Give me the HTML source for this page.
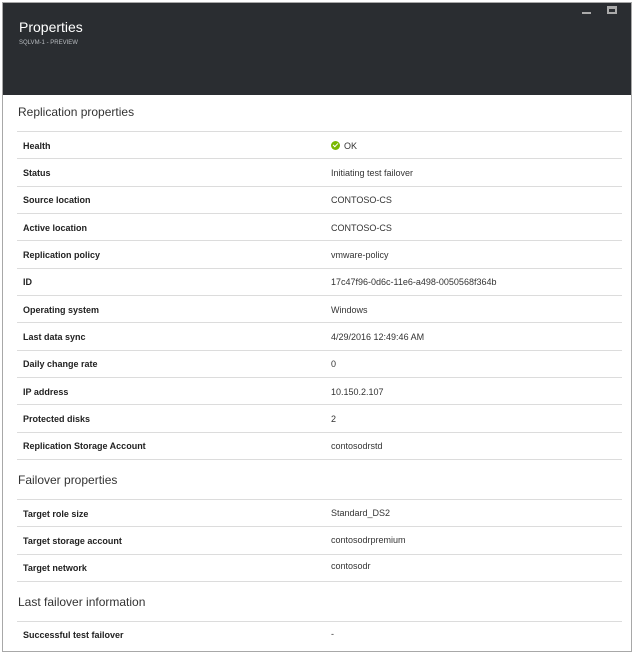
<!DOCTYPE html>
<html><head><meta charset="utf-8"><style>
*{margin:0;padding:0;box-sizing:border-box}
body{width:635px;height:645px;background:#fff;font-family:"Liberation Sans",sans-serif;position:relative;overflow:hidden;color:#222}
.frame{position:absolute;left:2px;top:2px;width:630px;height:650px;border:1px solid #a8a8a8}
.hdr{position:absolute;left:3px;top:3px;width:628px;height:92px;background:#2a2d31}
.t{position:absolute;left:16px;top:16px;color:#fff;font-size:14px}
.s{position:absolute;left:16px;top:37px;color:#b8bcc0;font-size:6px}
.min{position:absolute;left:579px;top:9px;width:9px;height:2px;background:#aaa}
.max{position:absolute;left:604px;top:3px;width:10px;height:8px;border:2px solid #aaa;border-top-width:3px}
.h{position:absolute;left:18px;font-size:12px;color:#333}
.ln{position:absolute;left:17px;width:605px;height:1px;background:#dcdcdc}
.l{position:absolute;left:23px;font-size:9px;font-weight:bold;color:#222}
.v{position:absolute;left:331px;font-size:9px;color:#333}
.ok{display:inline-block;width:9px;height:9px;border-radius:50%;background:#7ab800;vertical-align:-1px;margin-right:4px;position:relative}
.ok:after{content:"";position:absolute;left:2px;top:1.5px;width:4px;height:2px;border-left:1.5px solid #fff;border-bottom:1.5px solid #fff;transform:rotate(-45deg)}
</style></head><body>
<div class="frame"></div>
<div class="hdr"><div class="t">Properties</div><div class="s">SQLVM-1 - PREVIEW</div><div class="min"></div><div class="max"></div></div>
<div class="h" style="top:105px">Replication properties</div>
<div class="ln" style="top:131px"></div>
<div class="l" style="top:141px">Health</div><div class="v" style="top:141px"><span class="ok"></span>OK</div>
<div class="ln" style="top:158px"></div>
<div class="l" style="top:168px">Status</div><div class="v" style="top:168px">Initiating test failover</div>
<div class="ln" style="top:186px"></div>
<div class="l" style="top:195px">Source location</div><div class="v" style="top:195px">CONTOSO-CS</div>
<div class="ln" style="top:213px"></div>
<div class="l" style="top:223px">Active location</div><div class="v" style="top:223px">CONTOSO-CS</div>
<div class="ln" style="top:240px"></div>
<div class="l" style="top:250px">Replication policy</div><div class="v" style="top:250px">vmware-policy</div>
<div class="ln" style="top:268px"></div>
<div class="l" style="top:277px">ID</div><div class="v" style="top:277px">17c47f96-0d6c-11e6-a498-0050568f364b</div>
<div class="ln" style="top:295px"></div>
<div class="l" style="top:305px">Operating system</div><div class="v" style="top:305px">Windows</div>
<div class="ln" style="top:322px"></div>
<div class="l" style="top:332px">Last data sync</div><div class="v" style="top:332px">4/29/2016 12:49:46 AM</div>
<div class="ln" style="top:350px"></div>
<div class="l" style="top:359px">Daily change rate</div><div class="v" style="top:359px">0</div>
<div class="ln" style="top:377px"></div>
<div class="l" style="top:387px">IP address</div><div class="v" style="top:387px">10.150.2.107</div>
<div class="ln" style="top:404px"></div>
<div class="l" style="top:414px">Protected disks</div><div class="v" style="top:414px">2</div>
<div class="ln" style="top:432px"></div>
<div class="l" style="top:441px">Replication Storage Account</div><div class="v" style="top:441px">contosodrstd</div>
<div class="ln" style="top:459px"></div>
<div class="h" style="top:473px">Failover properties</div>
<div class="ln" style="top:499px"></div>
<div class="l" style="top:509px">Target role size</div><div class="v" style="top:508px">Standard_DS2</div>
<div class="ln" style="top:526px"></div>
<div class="l" style="top:536px">Target storage account</div><div class="v" style="top:535px">contosodrpremium</div>
<div class="ln" style="top:554px"></div>
<div class="l" style="top:563px">Target network</div><div class="v" style="top:561px">contosodr</div>
<div class="ln" style="top:581px"></div>
<div class="h" style="top:595px">Last failover information</div>
<div class="ln" style="top:621px"></div>
<div class="l" style="top:630px">Successful test failover</div><div class="v" style="top:629px">-</div>
</body></html>
